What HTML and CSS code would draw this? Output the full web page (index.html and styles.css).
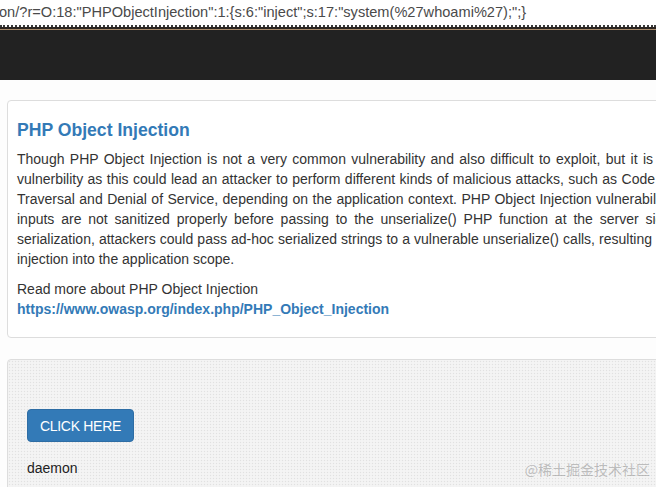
FILE: index.html
```html
<!DOCTYPE html>
<html>
<head>
<meta charset="utf-8">
<link rel="stylesheet" href="styles.css">
</head>
<body>
<div class="urlbar"><span class="url">on/?r=O:18:"PHPObjectInjection":1:{s:6:"inject";s:17:"system(%27whoami%27);";}</span></div>
<div class="accent"></div>
<div class="navbar"></div>
<main class="page">
  <section class="card info">
    <h4 class="title">PHP Object Injection</h4>
    <p class="desc">
      <span class="ln l1">Though PHP Object Injection is not a very common vulnerability and also difficult to exploit, but it is</span>
      <span class="ln l2">vulnerbility as this could lead an attacker to perform different kinds of malicious attacks, such as Code</span>
      <span class="ln l3">Traversal and Denial of Service, depending on the application context. PHP Object Injection vulnerability</span>
      <span class="ln l4">inputs are not sanitized properly before passing to the unserialize() PHP function at the server side.</span>
      <span class="ln l5">serialization, attackers could pass ad-hoc serialized strings to a vulnerable unserialize() calls, resulting</span>
      <span class="ln last">injection into the application scope.</span>
    </p>
    <p class="more">Read more about PHP Object Injection<br><a class="link" href="#">https://www.owasp.org/index.php/PHP_Object_Injection</a></p>
  </section>
  <section class="card demo">
    <button class="btn">CLICK HERE</button>
    <div class="result">daemon</div>
  </section>
</main>
<div class="watermark">@稀土掘金技术社区</div>
</body>
</html>
```
FILE: styles.css
```css
html, body {
  margin: 0;
  padding: 0;
  width: 656px;
  height: 487px;
  overflow: hidden;
  background: #fdfdfd;
  font-family: "Liberation Sans", Arial, sans-serif;
  color: #333;
}
.urlbar {
  height: 25px;
  background: #fff;
  display: flex;
  align-items: center;
  white-space: nowrap;
  overflow: hidden;
  border-bottom: 2px dotted #3a3a3a;
}
.url {
  font-size: 14.6px;
  color: #4a4a4a;
  margin-left: -1px;
  margin-top: -2px;
}
.accent {
  height: 2px;
  background: #2a2420;
  border-bottom: 1px solid #a88a6a;
}
.navbar {
  height: 50px;
  background: #222;
}
.page {
  padding: 20px 0 0 7px;
  display: flex;
  flex-direction: column;
  gap: 21px;
}
.card {
  width: 880px;
  border: 1px solid #ddd;
  border-radius: 4px;
  box-sizing: border-box;
}
.info {
  background: #fff;
  padding: 9px 9px 8px 9px;
}
.title {
  margin: 10px 0 9px;
  font-size: 17.6px;
  line-height: 20px;
  font-weight: bold;
  color: #337ab7;
}
.desc {
  margin: 0 0 10px;
  font-size: 14px;
  line-height: 20px;
}
.ln {
  display: block;
  white-space: nowrap;
  text-align: justify;
  text-align-last: justify;
}
.l1 { width: 636px; }
.l2 { width: 638px; }
.l3 { width: 653px; }
.l4 { width: 658px; }
.l5 { width: 635px; }
.ln.last {
  text-align-last: left;
}
.more {
  margin: 0 0 10px;
  font-size: 14px;
  line-height: 20px;
}
.link {
  color: #337ab7;
  font-weight: bold;
  text-decoration: none;
}
.demo {
  height: 200px;
  padding: 49px 19px 0;
  background-color: #f2f2f2;
  background-image:
    radial-gradient(circle, rgba(0,0,0,0.07) 0.8px, transparent 1px),
    radial-gradient(circle, rgba(255,255,255,0.6) 0.8px, transparent 1px);
  background-size: 3px 3px, 3px 3px;
  background-position: 0 0, 1.5px 1.5px;
}
.btn {
  display: block;
  width: 107px;
  height: 33px;
  background: #337ab7;
  color: #fff;
  border: 1px solid #2e6da4;
  border-radius: 4px;
  font-family: "Liberation Sans", Arial, sans-serif;
  font-size: 14px;
  letter-spacing: -0.3px;
  padding: 0;
  margin: 0 0 16px;
}
.result {
  font-size: 14px;
  line-height: 20px;
  color: #222;
}
.watermark {
  position: absolute;
  right: 6px;
  bottom: 8px;
  font-family: "Noto Sans CJK SC", sans-serif;
  font-size: 14px;
  color: rgba(120,120,120,0.45);
}
```
